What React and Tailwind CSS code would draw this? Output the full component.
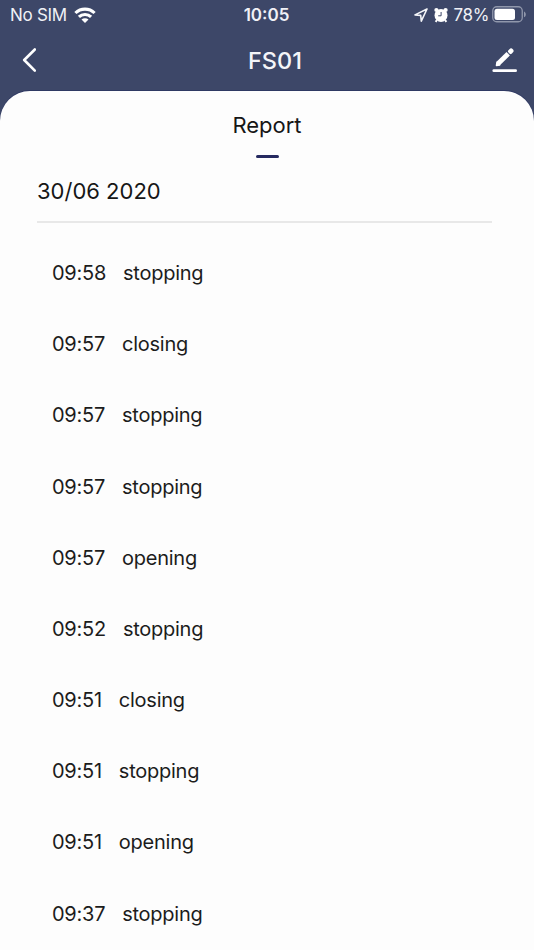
const reports = [
  { time: '09:58', action: 'stopping' },
  { time: '09:57', action: 'closing' },
  { time: '09:57', action: 'stopping' },
  { time: '09:57', action: 'stopping' },
  { time: '09:57', action: 'opening' },
  { time: '09:52', action: 'stopping' },
  { time: '09:51', action: 'closing' },
  { time: '09:51', action: 'stopping' },
  { time: '09:51', action: 'opening' },
  { time: '09:37', action: 'stopping' },
];

function WifiIcon() {
  return (
    <svg width="22" height="16" viewBox="0 0 22 16" fill="none" stroke="#fff" strokeWidth="3.1">
      <path d="M1.4 6a13.8 13.8 0 0 1 19.2 0" />
      <path d="M4.9 9.9a8.8 8.8 0 0 1 12.2 0" />
      <path d="M11 16 7.5 12.6a4.9 4.9 0 0 1 7 0Z" fill="#fff" stroke="none" />
    </svg>
  );
}

function LocationIcon() {
  return (
    <svg width="14" height="14" viewBox="0 0 14 14" fill="none" stroke="#f4f5f9" strokeWidth="1.6" strokeLinejoin="round">
      <path d="M13 1 1 6.9l5.7.5.6 5.7Z" />
    </svg>
  );
}

function AlarmIcon() {
  return (
    <svg width="14" height="16" viewBox="0 0 14 16" fill="none">
      <path d="M3 13 1.6 14.8M11 13l1.4 1.8" stroke="#fff" strokeWidth="2" />
      <circle cx="2.4" cy="3" r="2.1" fill="#fff" />
      <circle cx="11.6" cy="3" r="2.1" fill="#fff" />
      <circle cx="7" cy="8.4" r="6.5" fill="#fff" />
      <path d="M7.1 5v3.8H4.2" stroke="#3d4768" strokeWidth="1" />
    </svg>
  );
}

function BatteryIcon() {
  return (
    <svg width="35" height="17" viewBox="0 0 35 17" fill="none">
      <rect x="0.75" y="0.75" width="29.5" height="15" rx="4" stroke="#9097ab" strokeWidth="1.3" />
      <rect x="2.5" y="2.7" width="20.5" height="11.2" rx="2.5" fill="#fff" />
      <path d="M32 5.5c2.4.8 2.4 5 0 5.8Z" fill="#9097ab" />
    </svg>
  );
}

function BackIcon() {
  return (
    <svg width="14" height="25" viewBox="0 0 14 25" fill="none" stroke="#fff" strokeWidth="2.6" strokeLinecap="round" strokeLinejoin="round">
      <path d="M12.8 1.5 2.2 12l10.6 10.7" />
    </svg>
  );
}

function EditIcon() {
  return (
    <svg width="26" height="25" viewBox="0 0 26 25" fill="none" stroke="#fff" strokeLinecap="round">
      <path d="M1.8 22.7h21.8" strokeWidth="2.8" />
      <path d="M6 15.8 16.2 5.8" strokeWidth="4.8" strokeLinecap="butt" />
      <path d="m4.5 17.4.5-3 2.6 2.6Z" fill="#fff" strokeWidth="1.6" strokeLinejoin="round" />
      <path d="m18.4 3.6.7-.7" strokeWidth="4.8" />
      <path d="m15.4 3.6 3.6 3.6" stroke="#3d4768" strokeWidth="0.5" />
    </svg>
  );
}

function StatusBar() {
  return (
    <div className="grid h-[30px] grid-cols-[1fr_auto_1fr] items-center pr-[7px] pl-[10px] text-[17px] text-[#f0f1f6]">
      <div className="flex items-center gap-[7px]">
        <span className="pt-[2px] tracking-[-0.3px]">No SIM</span>
        <WifiIcon />
      </div>
      <span className="pt-[2px] pr-[4px] font-semibold">10:05</span>
      <div className="flex items-center justify-end">
        <LocationIcon />
        <div className="ml-[6px] pb-px">
          <AlarmIcon />
        </div>
        <span className="ml-[6px] pt-[2px] tracking-[-0.4px]">78%</span>
        <div className="ml-[3px] pb-px">
          <BatteryIcon />
        </div>
      </div>
    </div>
  );
}

export default function App() {
  return (
    <div className="flex h-[950px] w-[534px] flex-col overflow-hidden bg-[#3d4768] font-['Inter','Liberation_Sans',sans-serif]">
      <StatusBar />
      <header className="grid h-[61px] grid-cols-[1fr_auto_1fr] items-center pr-4 pl-[22px]">
        <button type="button" aria-label="Back">
          <BackIcon />
        </button>
        <h1 className="pt-px pl-[10px] text-[23.5px] font-medium text-[#f4f5f9]">FS01</h1>
        <button type="button" aria-label="Edit" className="justify-self-end">
          <EditIcon />
        </button>
      </header>
      <main className="flex-1 rounded-t-[30px] bg-[#fdfdfd] pt-[18px] shadow-[0_-1px_0_#2f3963]">
        <div className="flex flex-col items-center">
          <h2 className="text-[22px] leading-8 text-[#161616]">Report</h2>
          <div className="mt-[14px] h-[3px] w-[23px] rounded-full bg-[#262a60]" />
        </div>
        <p className="mt-[17px] mr-[42px] ml-[37px] h-[48px] border-b-2 border-[#e8e8e8] text-[22px] leading-8 text-[#161616]">
          30/06 2020
        </p>
        <ul className="mt-[14.4px] pl-[52px] text-[20px] tracking-[-0.25px] text-[#1c1c1c]">
          {reports.map((report, index) => (
            <li key={index} className="flex h-[71.2px] items-center gap-[17px]">
              <span>{report.time}</span>
              <span>{report.action}</span>
            </li>
          ))}
        </ul>
      </main>
    </div>
  );
}
